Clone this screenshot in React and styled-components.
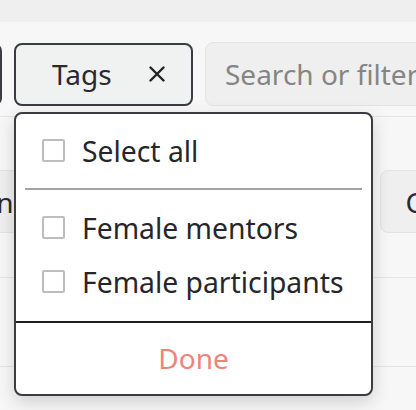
import React from "react";
import styled, { createGlobalStyle } from "styled-components";

const GlobalStyle = createGlobalStyle`
  body {
    margin: 0;
    background: #f7f7f7;
    font-family: "Noto Sans", "Open Sans", sans-serif;
    color: #2a2a2e;
  }
`;

const Page = styled.div`
  width: 416px;
  height: 410px;
  overflow: hidden;
  background: #f7f7f7;
`;

const TopStrip = styled.div`
  height: 22px;
  background: #efefef;
`;

const Toolbar = styled.div`
  display: flex;
  align-items: center;
  gap: 12px;
  padding: 20px 0 10px;
  border-bottom: 1px solid #e4e4e4;
`;

const FilterButton = styled.button`
  flex: none;
  display: flex;
  align-items: center;
  justify-content: space-between;
  box-sizing: border-box;
  width: ${(p) => p.$width}px;
  height: 63px;
  margin-left: ${(p) => p.$offset || 0}px;
  padding: 0 26px 0 36px;
  background: #f0f1f1;
  border: 2px solid #3b3c41;
  border-radius: 8px;
  font: inherit;
  font-size: 28px;
  color: #2a2a2e;
`;

const TagsWrap = styled.div`
  position: relative;
  flex: none;
`;

const SearchInput = styled.div`
  flex: none;
  box-sizing: border-box;
  width: 260px;
  height: 64px;
  display: flex;
  align-items: center;
  padding-left: 19px;
  background: #efefef;
  border: 1.5px solid #e3e3e3;
  border-radius: 8px;
  font-size: 28px;
  color: #858585;
  white-space: nowrap;
`;

const Section = styled.div`
  display: flex;
  justify-content: space-between;
  align-items: center;
  padding: 53px 0 44px;
  border-bottom: 1px solid #e4e4e4;
`;

const GreyButton = styled.div`
  flex: none;
  box-sizing: border-box;
  height: 63px;
  display: flex;
  align-items: center;
  padding: 0 25px;
  margin-left: ${(p) => p.$offset || 0}px;
  margin-right: ${(p) => p.$right || 0}px;
  background: #efefef;
  border: 1.5px solid #e3e3e3;
  border-radius: 8px;
  font-size: 28px;
  color: #2a2a2e;
  white-space: nowrap;
`;

const ListRow = styled.div`
  height: 88px;
  border-bottom: 1px solid #e4e4e4;
`;

const Dropdown = styled.div`
  position: absolute;
  top: 69px;
  left: 0;
  z-index: 2;
  box-sizing: border-box;
  width: 359px;
  height: 284px;
  display: flex;
  flex-direction: column;
  background: #fff;
  border: 2px solid #3b3c41;
  border-radius: 8px;
  box-shadow: 0 6px 18px rgba(0, 0, 0, 0.16);
  overflow: hidden;
`;

const OptionList = styled.div`
  display: flex;
  flex-direction: column;
  padding: 10px 0 12px;
  border-bottom: 2px solid #1e1e20;
`;

const Option = styled.label`
  display: flex;
  align-items: center;
  gap: 17px;
  height: 54px;
  padding-left: 26px;
  font-size: 28.3px;
  color: #26262a;
  white-space: nowrap;
`;

const Box = styled.span`
  flex: none;
  box-sizing: border-box;
  width: 23px;
  height: 23px;
  border: 2px solid #bdbdbd;
  border-radius: 2px;
  background: #fff;
`;

const Divider = styled.div`
  height: 2px;
  margin: 10px 9px 11px;
  background: #a3a3a6;
`;

const DoneButton = styled.div`
  flex: 1;
  display: flex;
  align-items: center;
  justify-content: center;
  font-size: 28px;
  color: #ef8377;
`;

const CloseIcon = () => (
  <svg width="16" height="16" viewBox="0 0 16 16" fill="none">
    <path d="M1.5 1.5 L14.5 14.5 M14.5 1.5 L1.5 14.5" stroke="#222" strokeWidth="2.4" strokeLinecap="round" />
  </svg>
);

const options = ["Female mentors", "Female participants"];

export default function App() {
  return (
    <Page>
      <GlobalStyle />
      <TopStrip />
      <Toolbar>
        <FilterButton $width={120} $offset={-118} />
        <TagsWrap>
          <FilterButton $width={179}>
            Tags
            <CloseIcon />
          </FilterButton>
          <Dropdown>
            <OptionList>
              <Option>
                <Box />
                Select all
              </Option>
              <Divider />
              {options.map((o) => (
                <Option key={o}>
                  <Box />
                  {o}
                </Option>
              ))}
            </OptionList>
            <DoneButton>Done</DoneButton>
          </Dropdown>
        </TagsWrap>
        <SearchInput>Search or filter</SearchInput>
      </Toolbar>
      <Section>
        <GreyButton $offset={-99}>Assign</GreyButton>
        <GreyButton $right={-121}>Clear all</GreyButton>
      </Section>
      <ListRow />
    </Page>
  );
}
